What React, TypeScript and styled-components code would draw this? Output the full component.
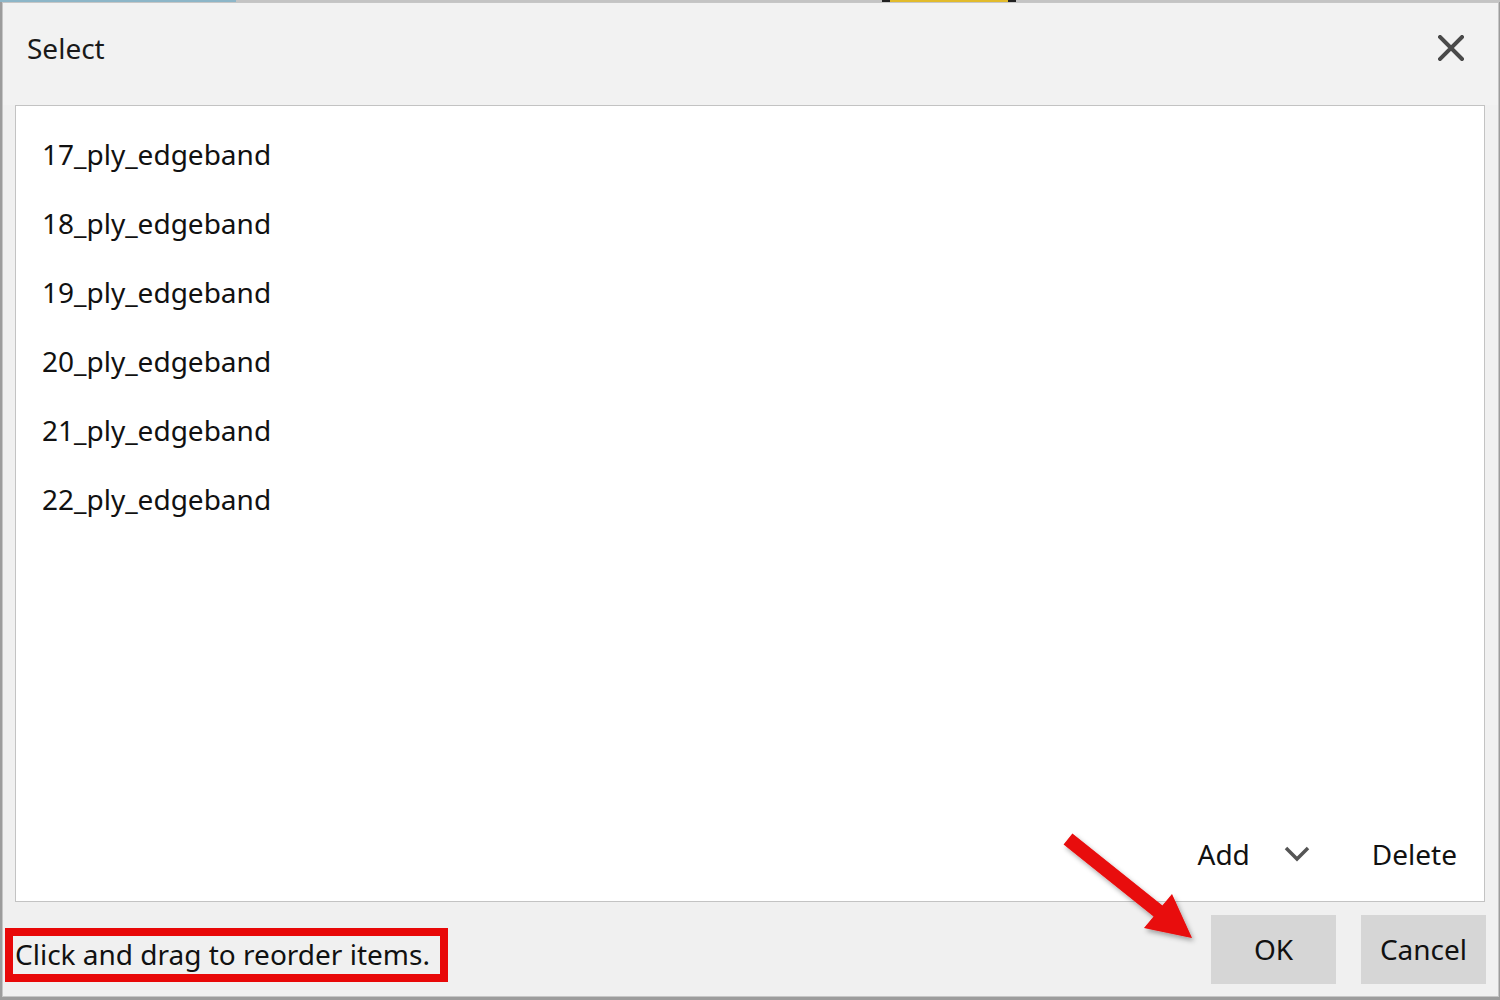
import React from "react";
import styled, { createGlobalStyle } from "styled-components";

const GlobalStyle = createGlobalStyle`
  html, body {
    margin: 0;
    padding: 0;
  }
  body {
    font-family: "Noto Sans", "Open Sans", sans-serif;
    color: #111;
  }
`;

const Desktop = styled.div`
  width: 1500px;
  height: 1000px;
  box-sizing: border-box;
  background: #9c9c9c;
  display: flex;
  flex-direction: column;
  position: relative;
  overflow: hidden;
`;

const BackdropStrip = styled.div`
  height: 2px;
  display: flex;
  flex-shrink: 0;
`;

const StripPart = styled.div<{ $w: number; $c: string }>`
  width: ${({ $w }) => $w}px;
  background: ${({ $c }) => $c};
`;

const Window = styled.div`
  flex: 1;
  margin: 0 1px 3px 2px;
  border: 1px solid #c6c6c6;
  background: #f0f0f0;
  display: flex;
  flex-direction: column;
`;

const TitleBar = styled.div`
  height: 102px;
  flex-shrink: 0;
  background: #f2f2f2;
  display: flex;
  align-items: center;
  justify-content: space-between;
  padding: 0 32px 0 24px;
`;

const Title = styled.div`
  font-size: 28px;
  margin-top: -12px;
  color: #1a1a1a;
`;

const CloseButton = styled.button`
  border: none;
  background: transparent;
  padding: 0;
  width: 30px;
  height: 30px;
  margin-top: -12px;
  display: flex;
  align-items: center;
  justify-content: center;
`;

const ListPanel = styled.div`
  flex: 1;
  margin: 0 13px 0 12px;
  background: #fff;
  border: 1px solid #c3c3c3;
  display: flex;
  flex-direction: column;
`;

const ItemList = styled.div`
  padding: 14px 26px 0;
  display: flex;
  flex-direction: column;
`;

const Item = styled.div`
  height: 69px;
  line-height: 69px;
  font-size: 28px;
`;

const Toolbar = styled.div`
  margin-top: auto;
  height: 94px;
  display: flex;
  align-items: center;
  justify-content: flex-end;
  padding-right: 27px;
`;

const ToolButton = styled.span`
  font-size: 28px;
`;

const Chevron = styled.span`
  display: flex;
  margin: 0 62px 0 34px;
`;

const Footer = styled.div`
  height: 94px;
  flex-shrink: 0;
  display: flex;
  align-items: center;
  justify-content: space-between;
  padding: 0 12px 0 2px;
`;

const Hint = styled.div`
  border: 8px solid #e80808;
  padding: 0 10px 0 2px;
  height: 38px;
  line-height: 36px;
  font-size: 28px;
  margin-top: 12px;
  white-space: nowrap;
`;

const ButtonGroup = styled.div`
  display: flex;
  gap: 25px;
`;

const DialogButton = styled.button`
  width: 125px;
  height: 69px;
  border: none;
  background: #d6d6d6;
  font-family: "Noto Sans", "Open Sans", sans-serif;
  font-size: 28px;
  color: #111;
  padding: 0;
`;

const ArrowLayer = styled.svg`
  position: absolute;
  left: 1050px;
  top: 820px;
  width: 160px;
  height: 130px;
  overflow: visible;
  pointer-events: none;
`;

const items = [
  "17_ply_edgeband",
  "18_ply_edgeband",
  "19_ply_edgeband",
  "20_ply_edgeband",
  "21_ply_edgeband",
  "22_ply_edgeband",
];

const App = () => {
  return (
    <>
      <GlobalStyle />
      <Desktop>
        <BackdropStrip>
          <StripPart $w={236} $c="#8db6c8" />
          <StripPart $w={646} $c="#c4c4c4" />
          <StripPart $w={8} $c="#222" />
          <StripPart $w={118} $c="#e2bb2c" />
          <StripPart $w={8} $c="#222" />
          <StripPart $w={484} $c="#c4c4c4" />
        </BackdropStrip>
        <Window>
          <TitleBar>
            <Title>Select</Title>
            <CloseButton>
              <svg width="26" height="26" viewBox="0 0 26 26">
                <path
                  d="M2 2 L24 24 M24 2 L2 24"
                  stroke="#4a4a4a"
                  strokeWidth="4"
                  strokeLinecap="square"
                />
              </svg>
            </CloseButton>
          </TitleBar>
          <ListPanel>
            <ItemList>
              {items.map((name) => (
                <Item key={name}>{name}</Item>
              ))}
            </ItemList>
            <Toolbar>
              <ToolButton>Add</ToolButton>
              <Chevron>
                <svg width="26" height="16" viewBox="0 0 26 16">
                  <path
                    d="M2 2 L13 13 L24 2"
                    fill="none"
                    stroke="#555"
                    strokeWidth="3.5"
                  />
                </svg>
              </Chevron>
              <ToolButton>Delete</ToolButton>
            </Toolbar>
          </ListPanel>
          <Footer>
            <Hint>Click and drag to reorder items.</Hint>
            <ButtonGroup>
              <DialogButton>OK</DialogButton>
              <DialogButton>Cancel</DialogButton>
            </ButtonGroup>
          </Footer>
        </Window>
        <ArrowLayer viewBox="0 0 160 130">
          <defs>
            <filter id="arrowShadow" x="-20%" y="-20%" width="150%" height="150%">
              <feDropShadow dx="2" dy="3" stdDeviation="2.5" floodColor="#000" floodOpacity="0.35" />
            </filter>
          </defs>
          <polygon
            points="22.4,13.5 112.4,85.5 122,74 142,118 94,108 103.6,96.5 13.6,24.5"
            fill="#e80808"
            filter="url(#arrowShadow)"
          />
        </ArrowLayer>
      </Desktop>
    </>
  );
};

export default App;
